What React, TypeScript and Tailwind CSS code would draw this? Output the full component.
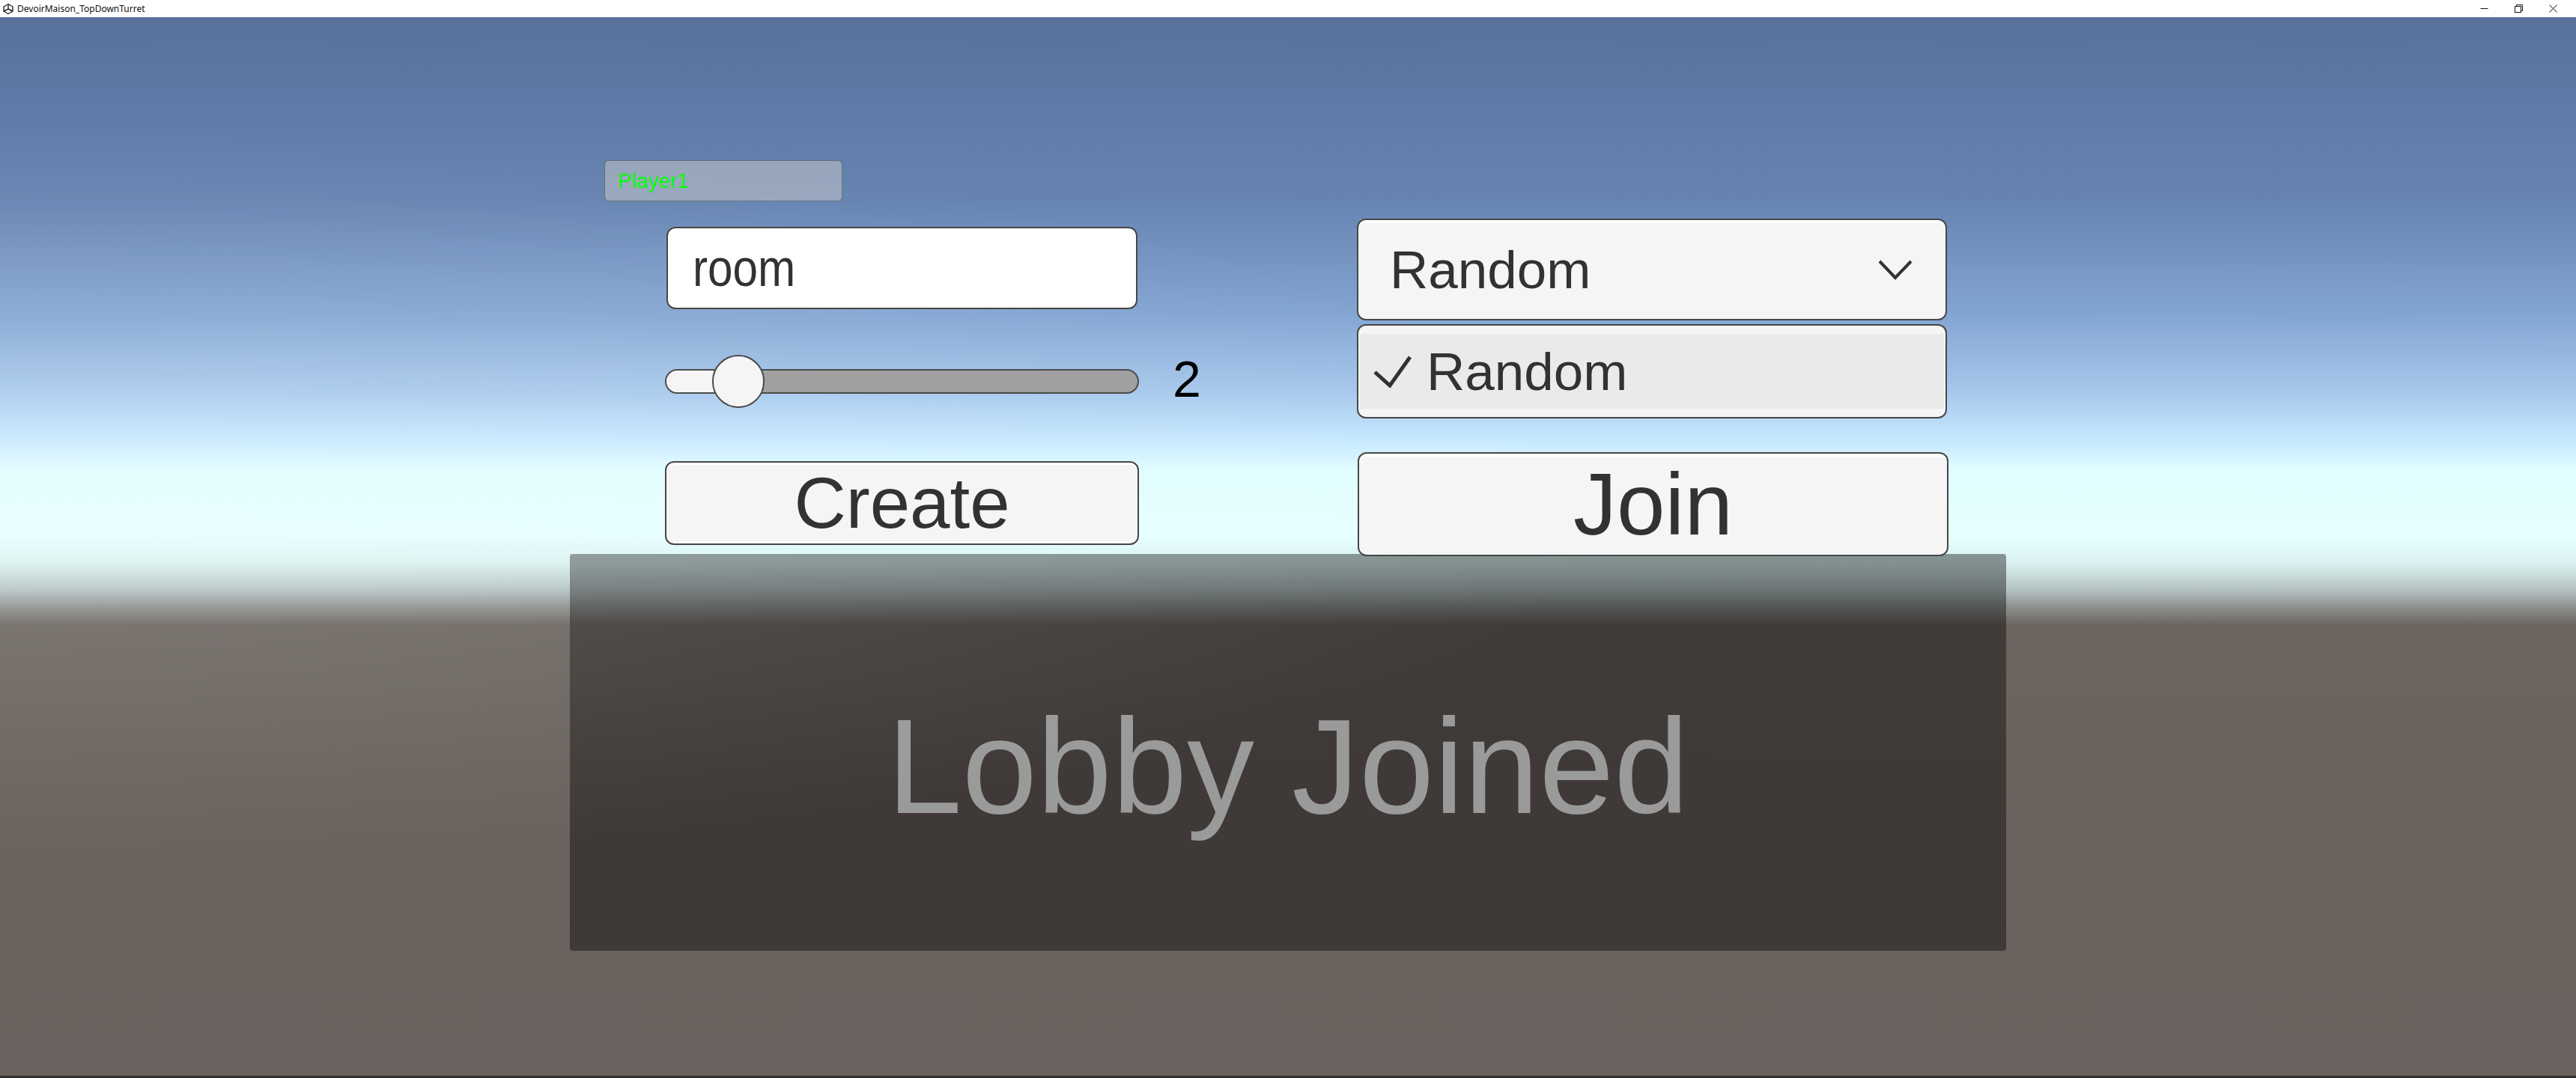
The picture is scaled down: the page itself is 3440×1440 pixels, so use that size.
import React from "react";

const F = { fontFamily: '"Liberation Sans", Arial, sans-serif' };

function UnityIcon() {
  return (
    <svg width="16" height="16" viewBox="0 0 16 16" fill="none" stroke="#222" strokeWidth="1.4" strokeLinejoin="round">
      <path d="M8 1.5 L14 5 L14 11 L8 14.5 L2 11 L2 5 Z" />
      <path d="M8 8 L8 1.5 M8 8 L2 11 M8 8 L14 11" />
    </svg>
  );
}

function TitleBar() {
  return (
    <div className="flex h-[23px] w-full items-center bg-white" style={{ fontFamily: '"Noto Sans", "Open Sans", sans-serif' }}>
      <div className="ml-[2px] flex h-[23px] w-[18px] items-center justify-center">
        <UnityIcon />
      </div>
      <span className="ml-[3px] text-[12px] leading-none text-[#111]">DevoirMaison_TopDownTurret</span>
      <div className="ml-auto flex h-[23px] items-center">
        <div className="flex w-[46px] justify-center">
          <svg width="11" height="11" viewBox="0 0 11 11"><path d="M0.5 5.5 H10.5" stroke="#111" strokeWidth="1" /></svg>
        </div>
        <div className="flex w-[46px] justify-center">
          <svg width="11" height="11" viewBox="0 0 11 11" fill="none" stroke="#111" strokeWidth="1">
            <rect x="0.5" y="2.5" width="8" height="8" />
            <path d="M2.5 2.5 V0.5 H10.5 V8.5 H8.5" />
          </svg>
        </div>
        <div className="mr-[8px] flex w-[46px] justify-center">
          <svg width="11" height="11" viewBox="0 0 11 11" stroke="#111" strokeWidth="1">
            <path d="M0.5 0.5 L10.5 10.5 M10.5 0.5 L0.5 10.5" />
          </svg>
        </div>
      </div>
    </div>
  );
}

export default function App() {
  return (
    <div className="flex h-[1440px] w-[3440px] flex-col overflow-hidden" style={F}>
      <TitleBar />
      <div className="relative flex h-[1417px] w-full flex-col border-b-[3px] border-[#2e2e2e] bg-[linear-gradient(180deg,#58719c_0px,#6683b0_240px,#84a6d2_400px,#a6c8ec_500px,#c6e8ff_565px,#e0fdff_605px,#e6ffff_690px,#dcf2f2_728px,#b4c2c2_765px,#8a8c8a_790px,#6b645f_812px,#69625d_1000px,#6a625e_1417px)]">
        <div className="pointer-events-none absolute inset-0 bg-[radial-gradient(ellipse_at_0%_45%,rgba(255,255,255,0.16),rgba(255,255,255,0)_45%)]" />
        {/* Top controls row */}
        <div className="relative z-10 flex pl-[807px] pt-[191px]">
          {/* Left column */}
          <div className="flex w-[1005px] flex-col">
            <div className="flex h-[55px] w-[318px] items-center rounded-[6px] border border-[rgba(60,66,80,0.55)] bg-[rgba(203,203,203,0.5)] pl-[17px]">
              <span className="text-[28px] leading-none text-[#00ff00]">Player1</span>
            </div>
            <div className="ml-[83px] mt-[34px] flex h-[110px] w-[629px] items-center rounded-[12px] border-2 border-[#474747] bg-white pl-[33px] shadow-[inset_0_2px_0_#ffffff]">
              <span className="origin-left scale-x-[0.86] text-[70px] leading-none text-[#323232]">room</span>
            </div>
            <div className="ml-[81px] mt-[61px] flex h-[71px] items-center">
              <div className="relative h-[33px] w-[633px] rounded-full border-2 border-[#4a4a4a] bg-[#a0a0a0]">
                <div className="h-full w-[98px] rounded-l-full bg-[#f5f5f5]" />
                <div className="absolute left-[61px] top-[-21px] h-[71px] w-[70px] rounded-full border-2 border-[#4a4a4a] bg-[#f5f5f5]" />
              </div>
              <span className="mb-[8px] ml-[45px] text-[68px] leading-none text-black">2</span>
            </div>
            <div className="ml-[81px] mt-[71px] flex h-[112px] w-[633px] items-center justify-center rounded-[12px] border-2 border-[#474747] bg-[#f5f5f5] shadow-[inset_0_3px_0_#ffffff]">
              <span className="text-[96px] leading-none text-[#323232]">Create</span>
            </div>
          </div>
          {/* Right column */}
          <div className="mt-[78px] flex w-[790px] flex-col">
            <div className="flex h-[136px] w-[788px] items-center justify-between rounded-[12px] border-2 border-[#474747] bg-[#f5f5f5] pl-[42px] pr-[44px] shadow-[inset_0_4px_0_#ffffff]">
              <span className="text-[71px] leading-none text-[#323232]">Random</span>
              <svg width="46" height="28" viewBox="0 0 46 28" fill="none" stroke="#323232" strokeWidth="4">
                <polyline points="2,3 23,25 44,3" />
              </svg>
            </div>
            <div className="mt-[5px] flex h-[126px] w-[788px] flex-col justify-center rounded-[12px] border-2 border-[#474747] bg-[#f5f5f5] px-[2px]">
              <div className="flex h-[100px] items-center bg-[#eaeaea] pl-[17px]">
                <svg width="52" height="44" viewBox="0 0 52 44" fill="none" stroke="#323232" strokeWidth="5">
                  <polyline points="3,23 23,41 50,3" />
                </svg>
                <span className="ml-[20px] text-[71px] leading-none text-[#323232]">Random</span>
              </div>
            </div>
            <div className="ml-[1px] mt-[45px] flex h-[139px] w-[789px] items-center justify-center rounded-[12px] border-2 border-[#474747] bg-[#f5f5f5] shadow-[inset_0_4px_0_#ffffff]">
              <span className="text-[116px] leading-none text-[#323232]">Join</span>
            </div>
          </div>
        </div>
        {/* Lobby panel */}
        <div className="ml-[761px] mt-[-3px] flex h-[530px] w-[1918px] items-center justify-center rounded-[4px] bg-black/40 pt-[38px]">
          <span className="text-[180px] leading-none text-[#9a9a9a]">Lobby Joined</span>
        </div>
      </div>
    </div>
  );
}
